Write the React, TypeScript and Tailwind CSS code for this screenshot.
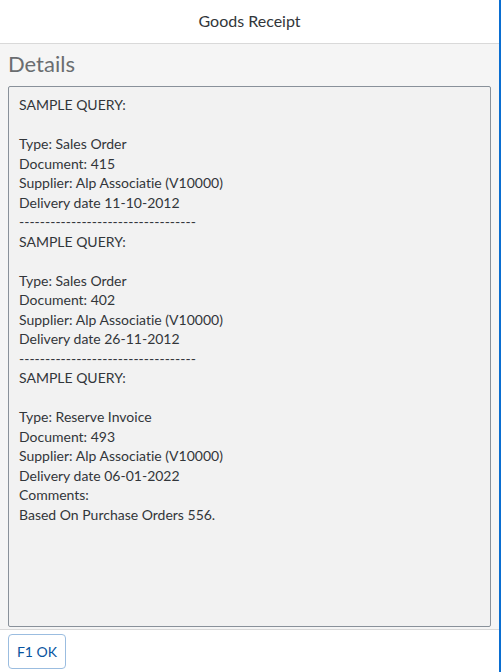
import React from 'react';

const QUERIES = [
    { type: 'Sales Order', doc: '415', supplier: 'Alp Associatie (V10000)', date: '11-10-2012' },
    { type: 'Sales Order', doc: '402', supplier: 'Alp Associatie (V10000)', date: '26-11-2012' },
    {
        type: 'Reserve Invoice',
        doc: '493',
        supplier: 'Alp Associatie (V10000)',
        date: '06-01-2022',
        comments: 'Based On Purchase Orders 556.',
    },
];

const SEPARATOR = '-'.repeat(34);

function buildText() {
    return QUERIES.map((q) => {
        const lines = [
            'SAMPLE QUERY:',
            '',
            `Type: ${q.type}`,
            `Document: ${q.doc}`,
            `Supplier: ${q.supplier}`,
            `Delivery date ${q.date}`,
        ];
        if (q.comments) {
            lines.push('Comments:', q.comments);
        }
        return lines.join('\n');
    }).join(`\n${SEPARATOR}\n`);
}

export default function App() {
    return (
        <div className="flex h-[672px] w-[501px] font-['Lato','Noto_Sans',sans-serif] text-[#32363a] [font-variant-ligatures:none]">
            <div className="flex flex-1 flex-col border-r-2 border-[#0a6ed1]">
                {/* Header */}
                <header className="flex h-[44px] shrink-0 items-center justify-center border-b border-[#d9d9d9] bg-white pb-[2px] text-[16px]">
                    Goods Receipt
                </header>

                {/* Content */}
                <main className="flex min-h-0 flex-1 flex-col bg-[#f5f5f5] px-2 pb-[2px]">
                    <h2 className="pt-[6px] pb-[8px] text-[22px] leading-[28px] text-[#6a6d70]">Details</h2>
                    <div className="flex-1 whitespace-pre-wrap rounded-[2px] border border-[#89919a] bg-[#f2f2f2] px-[10px] pt-[8px] text-[14px] leading-[19.5px]">
                        {buildText()}
                    </div>
                </main>

                {/* Footer */}
                <footer className="flex h-[43px] shrink-0 items-start border-t border-[#d9d9d9] bg-white px-2 pt-[4px]">
                    <button className="h-[35px] w-[58px] rounded-[4px] border border-[#9bbde0] bg-white text-[14px] text-[#0854a0]">
                        F1 OK
                    </button>
                </footer>
            </div>
        </div>
    );
}
